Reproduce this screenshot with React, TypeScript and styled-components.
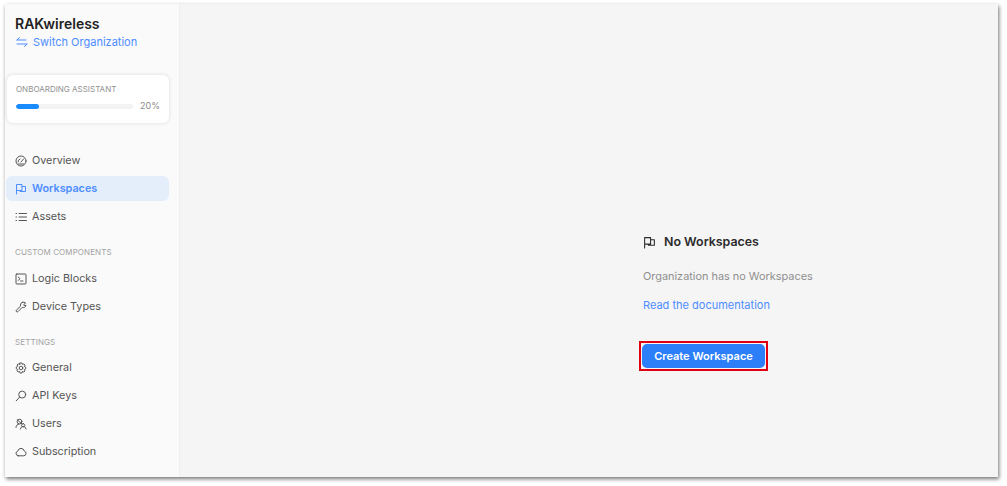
import { ReactNode } from 'react'
import { createGlobalStyle, styled } from 'styled-components'

const GlobalStyle = createGlobalStyle`
  html, body {
    margin: 0;
    background: #fff;
  }
  * {
    box-sizing: border-box;
  }
`

const Frame = styled.div`
  width: 1007px;
  height: 486px;
  padding: 4px 9px 9px 5px;
  font-family: Inter, 'Noto Sans', sans-serif;
`

const Shell = styled.div`
  display: flex;
  height: 473px;
  background: #f5f5f5;
  box-shadow: 1px 2px 4px rgba(0, 0, 0, 0.55);
`

const Sidebar = styled.aside`
  flex: 0 0 175px;
  display: flex;
  flex-direction: column;
  padding: 11px 1px 0;
  background: #fafafa;
  border-right: 1px solid #efefef;
`

const OrgName = styled.div`
  padding-left: 9px;
  font-size: 14px;
  line-height: 17px;
  font-weight: 600;
  color: #222;
`

const SwitchLink = styled.a`
  display: flex;
  align-items: center;
  gap: 5px;
  margin-top: 2px;
  padding-left: 10px;
  font-size: 11px;
  line-height: 16px;
  color: #4d8dff;
`

const AssistantCard = styled.div`
  margin: 25px 9px 0 1px;
  height: 48px;
  padding: 8px 9px 0;
  background: #fff;
  border-radius: 6px;
  box-shadow: 0 0 4px rgba(0, 0, 0, 0.12);
`

const AssistantTitle = styled.div`
  font-size: 8px;
  line-height: 12px;
  color: #8f8f8f;
`

const ProgressRow = styled.div`
  display: flex;
  align-items: center;
  gap: 7px;
  margin-top: 5px;
  font-size: 9px;
  line-height: 12px;
  color: #8c8c8c;
`

const ProgressTrack = styled.div`
  flex: 1;
  height: 5px;
  background: #f3f3f3;
  border-radius: 3px;
  overflow: hidden;
`

const ProgressFill = styled.div`
  height: 100%;
  background: #1a8cff;
  border-radius: 3px;
`

const Nav = styled.nav<{ $top: number }>`
  display: flex;
  flex-direction: column;
  margin-top: ${(p) => p.$top}px;
`

const NavItem = styled.a<{ $active?: boolean }>`
  display: flex;
  align-items: center;
  gap: 5px;
  height: 25px;
  margin: 0 9px 3px 0;
  padding-left: 9px;
  border-radius: 6px;
  font-size: 10.8px;
  font-weight: ${(p) => (p.$active ? 600 : 400)};
  color: ${(p) => (p.$active ? '#4d8dff' : '#555')};
  background: ${(p) => (p.$active ? '#e4eefb' : 'transparent')};
`

const SectionLabel = styled.div`
  margin-top: 14px;
  padding-left: 9px;
  font-size: 8px;
  line-height: 12px;
  letter-spacing: 0.1px;
  color: #a3a3a3;
`

const Main = styled.main`
  flex: 1;
  display: flex;
  flex-direction: column;
  align-items: flex-start;
  padding: 230px 0 0 463px;
`

const EmptyTitle = styled.h2`
  display: flex;
  align-items: center;
  gap: 8px;
  margin: 0;
  font-size: 12.4px;
  line-height: 16px;
  font-weight: 600;
  color: #2b2b2b;
`

const EmptyText = styled.p`
  margin: 18px 0 0;
  font-size: 10.9px;
  line-height: 16px;
  color: #8f8f8f;
`

const DocLink = styled.a`
  margin-top: 13px;
  font-size: 11px;
  line-height: 16px;
  color: #4d8dff;
`

const ButtonHighlight = styled.div`
  margin: 28px 0 0 -4px;
  padding: 1px;
  border: 2px solid #e0000f;
`

const CreateButton = styled.button`
  display: block;
  width: 123px;
  height: 24px;
  padding: 0;
  border: 0;
  border-radius: 5px;
  background: #2d7ff9;
  font-family: inherit;
  font-size: 11px;
  font-weight: 600;
  color: #fff;
`

const Svg = styled.svg`
  flex: none;
  fill: none;
  stroke: currentColor;
  stroke-width: 1;
  stroke-linecap: round;
  stroke-linejoin: round;
`

function Icon({ size = 12, children }: { size?: number; children: ReactNode }) {
  return (
    <Svg width={size} height={size} viewBox="0 0 12 12">
      {children}
    </Svg>
  )
}

const SwitchIcon = () => (
  <Icon>
    <path d="M1 4h9M3.5 1.5 1 4M1 8h10M8.5 10.5 11 8" />
  </Icon>
)
const GaugeIcon = () => (
  <Icon>
    <circle cx="6" cy="6" r="5" />
    <path d="M3 7a3 3 0 0 1 2-3M6 7l2.5-3M8.5 9h-5" />
  </Icon>
)
const FlagIcon = ({ size }: { size?: number }) => (
  <Icon size={size}>
    <path d="M1.5 11V1.5h5.5V7.5H1.5M7 3.5h3.5v5H5V7.5" />
  </Icon>
)
const ListIcon = () => (
  <Icon>
    <path d="M4 2.5h7.5M4 6h7.5M4 9.5h7.5M1 2.5h.5M1 6h.5M1 9.5h.5" />
  </Icon>
)
const TerminalIcon = () => (
  <Icon>
    <rect x="1" y="1" width="10" height="10" rx="0.8" />
    <path d="M3.2 4 5 5.7 3.2 7.5M5.5 8h2.5" />
  </Icon>
)
const WrenchIcon = () => (
  <Icon>
    <path d="M7.2 1.4a2.8 2.8 0 0 1 3.4.7L8.7 3.6l.4 1 1.9-.3A2.8 2.8 0 0 1 7.2 6.4L3 10.6a1 1 0 0 1-1.6-1.5L5.6 5a2.8 2.8 0 0 1 1.6-3.6Z" />
  </Icon>
)
const GearIcon = () => (
  <Icon>
    <path d="M5 1h2l.4 1.4 1.4-.5 1.2 1.3-.7 1.3 1.4.7v1.7l-1.4.7.7 1.3L8.8 10l-1.4-.5L7 11H5l-.4-1.5-1.4.5L2 8.7l.7-1.3L1.3 6.7V5l1.4-.7L2 3l1.2-1.1 1.4.5Z" />
    <circle cx="6" cy="6" r="1.8" />
  </Icon>
)
const KeyIcon = () => (
  <Icon>
    <circle cx="7.2" cy="4.6" r="3.5" />
    <path d="M4.6 7.2 1.2 10.8" />
  </Icon>
)
const UsersIcon = () => (
  <Icon>
    <circle cx="4.5" cy="3.6" r="2.4" />
    <path d="M1 9.5c0-2 1.2-3.2 3-3.5M2.2 1.8 7 6M8.2 5.6a1.7 1.7 0 1 0 .01 0ZM5.4 11c.2-1.5 1.3-2.6 2.8-2.6s2.5 1 2.8 2.6" />
  </Icon>
)
const CloudIcon = () => (
  <Icon>
    <path d="M3.2 9.8h5.6a2.4 2.4 0 0 0 .5-4.7A3.4 3.4 0 0 0 6 2.4a3.4 3.4 0 0 0-3.2 2.7 2.4 2.4 0 0 0 .4 4.7Z" />
  </Icon>
)

export default function App() {
  return (
    <>
      <GlobalStyle />
      <Frame>
        <Shell>
          <Sidebar>
            <OrgName>RAKwireless</OrgName>
            <SwitchLink>
              <SwitchIcon />
              Switch Organization
            </SwitchLink>
            <AssistantCard>
              <AssistantTitle>ONBOARDING ASSISTANT</AssistantTitle>
              <ProgressRow>
                <ProgressTrack>
                  <ProgressFill style={{ width: '20%' }} />
                </ProgressTrack>
                20%
              </ProgressRow>
            </AssistantCard>
            <Nav $top={25}>
              <NavItem>
                <GaugeIcon />
                Overview
              </NavItem>
              <NavItem $active>
                <FlagIcon />
                Workspaces
              </NavItem>
              <NavItem>
                <ListIcon />
                Assets
              </NavItem>
            </Nav>
            <SectionLabel>CUSTOM COMPONENTS</SectionLabel>
            <Nav $top={8}>
              <NavItem>
                <TerminalIcon />
                Logic Blocks
              </NavItem>
              <NavItem>
                <WrenchIcon />
                Device Types
              </NavItem>
            </Nav>
            <SectionLabel>SETTINGS</SectionLabel>
            <Nav $top={7}>
              <NavItem>
                <GearIcon />
                General
              </NavItem>
              <NavItem>
                <KeyIcon />
                API Keys
              </NavItem>
              <NavItem>
                <UsersIcon />
                Users
              </NavItem>
              <NavItem>
                <CloudIcon />
                Subscription
              </NavItem>
            </Nav>
          </Sidebar>
          <Main>
            <EmptyTitle>
              <FlagIcon size={13} />
              No Workspaces
            </EmptyTitle>
            <EmptyText>Organization has no Workspaces</EmptyText>
            <DocLink>Read the documentation</DocLink>
            <ButtonHighlight>
              <CreateButton>Create Workspace</CreateButton>
            </ButtonHighlight>
          </Main>
        </Shell>
      </Frame>
    </>
  )
}
